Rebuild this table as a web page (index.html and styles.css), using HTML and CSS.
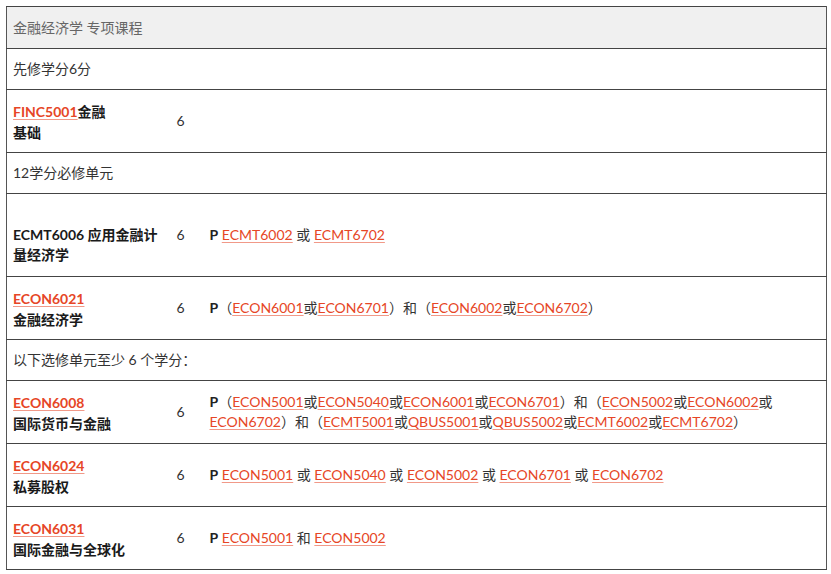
FILE: index.html
```html
<!DOCTYPE html>
<html lang="zh-CN">
<head>
<meta charset="utf-8">
<link rel="stylesheet" href="styles.css">
</head>
<body>
<table class="units">
  <colgroup><col class="c1"><col class="c2"><col class="c3"></colgroup>
  <tr class="head"><td colspan="3">金融经济学 专项课程</td></tr>
  <tr class="section"><td colspan="3">先修学分6分</td></tr>
  <tr>
    <td class="name"><a href="#">FINC5001</a>金融<br>基础</td>
    <td class="cp">6</td>
    <td class="req"></td>
  </tr>
  <tr class="section"><td colspan="3">12学分必修单元</td></tr>
  <tr>
    <td class="name tall"><br>ECMT6006 应用金融计量经济学</td>
    <td class="cp">6</td>
    <td class="req"><b>P</b> <a href="#">ECMT6002</a> 或 <a href="#">ECMT6702</a></td>
  </tr>
  <tr>
    <td class="name"><a href="#">ECON6021</a><br>金融经济学</td>
    <td class="cp">6</td>
    <td class="req"><b>P</b>（<a href="#">ECON6001</a>或<a href="#">ECON6701</a>）和（<a href="#">ECON6002</a>或<a href="#">ECON6702</a>）</td>
  </tr>
  <tr class="section"><td colspan="3">以下选修单元至少 6 个学分：</td></tr>
  <tr>
    <td class="name"><a href="#">ECON6008</a><br>国际货币与金融</td>
    <td class="cp">6</td>
    <td class="req"><b>P</b>（<a href="#">ECON5001</a>或<a href="#">ECON5040</a>或<a href="#">ECON6001</a>或<a href="#">ECON6701</a>）和（<a href="#">ECON5002</a>或<a href="#">ECON6002</a>或<br><a href="#">ECON6702</a>）和（<a href="#">ECMT5001</a>或<a href="#">QBUS5001</a>或<a href="#">QBUS5002</a>或<a href="#">ECMT6002</a>或<a href="#">ECMT6702</a>）</td>
  </tr>
  <tr>
    <td class="name"><a href="#">ECON6024</a><br>私募股权</td>
    <td class="cp">6</td>
    <td class="req"><b>P</b> <a href="#">ECON5001</a> 或 <a href="#">ECON5040</a> 或 <a href="#">ECON5002</a> 或 <a href="#">ECON6701</a> 或 <a href="#">ECON6702</a></td>
  </tr>
  <tr>
    <td class="name"><a href="#">ECON6031</a><br>国际金融与全球化</td>
    <td class="cp">6</td>
    <td class="req"><b>P</b> <a href="#">ECON5001</a> 和 <a href="#">ECON5002</a></td>
  </tr>
</table>
</body>
</html>
```

FILE: styles.css
```css
html, body {
  margin: 0;
  padding: 0;
  background: #fff;
}
body {
  font-family: Lato, "Noto Sans CJK SC", sans-serif;
  font-size: 14px;
  line-height: 20px;
  color: #333;
}
.units {
  margin: 6px 0 0 6px;
  width: 821px;
  border-collapse: collapse;
  border-left: 1px solid #555;
  border-right: 1px solid #555;
  border-top: 1px solid #444;
  table-layout: fixed;
}
.c1 { width: 164px; }
.c2 { width: 33px; }
.units td {
  border-bottom: 1px solid #444;
  padding: 10px 6px 10px 6px;
  vertical-align: middle;
}
.units .head td {
  background: #f0f0f0;
  color: #666;
  padding: 11px 6px 10px 6px;
}
.section td {
  color: #333;
}
.units .name {
  font-weight: bold;
  color: #1a1a1a;
  line-height: 21px;
  padding: 11px 6px 9px 6px;
}
.units .name.tall {
  line-height: 20px;
  padding: 11px 6px 11px 6px;
}
.cp {
  color: #333;
}
.req b {
  color: #222;
}
a {
  color: #e64626;
  text-decoration: underline;
  text-decoration-color: rgba(230, 70, 38, 0.55);
  text-underline-offset: 2px;
  font-weight: normal;
}
.name a {
  font-weight: bold;
}
```
